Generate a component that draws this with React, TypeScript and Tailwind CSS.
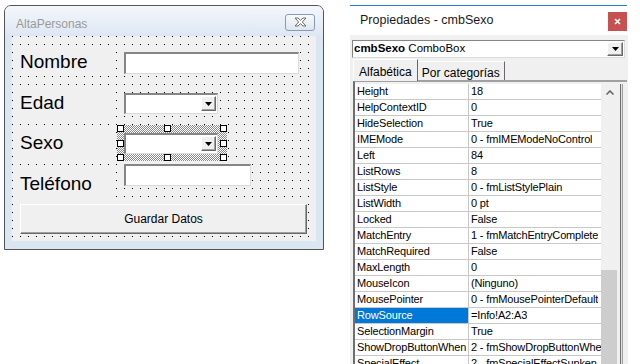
import React from 'react';

const PROPS: [string, string][] = [
  ['Height', '18'],
  ['HelpContextID', '0'],
  ['HideSelection', 'True'],
  ['IMEMode', '0 - fmIMEModeNoControl'],
  ['Left', '84'],
  ['ListRows', '8'],
  ['ListStyle', '0 - fmListStylePlain'],
  ['ListWidth', '0 pt'],
  ['Locked', 'False'],
  ['MatchEntry', '1 - fmMatchEntryComplete'],
  ['MatchRequired', 'False'],
  ['MaxLength', '0'],
  ['MouseIcon', '(Ninguno)'],
  ['MousePointer', '0 - fmMousePointerDefault'],
  ['RowSource', '=Info!A2:A3'],
  ['SelectionMargin', 'True'],
  ['ShowDropButtonWhen', '2 - fmShowDropButtonWhenNever'],
  ['SpecialEffect', '2 - fmSpecialEffectSunken'],
];

function DropButton({ className = '' }: { className?: string }) {
  return (
    <div
      className={`flex items-center justify-center bg-[#f0f0f0] border border-t-white border-l-white border-r-[#696969] border-b-[#696969] shadow-[inset_-1px_-1px_0_#a0a0a0] ${className}`}
    >
      <svg width="7" height="4" viewBox="0 0 7 4">
        <path d="M0 0h7L3.5 4z" fill="#000" />
      </svg>
    </div>
  );
}

function TextBox({ w }: { w: string }) {
  return (
    <div
      className={`${w} h-[22px] bg-white border-t-2 border-l-2 border-r border-b border-t-[#858585] border-l-[#858585] border-r-[#dcdcdc] border-b-[#dcdcdc]`}
    />
  );
}

function Combo() {
  return (
    <div className="relative w-[94px] h-[21px] bg-white border-t-2 border-l-2 border-r border-b border-t-[#858585] border-l-[#858585] border-r-[#dcdcdc] border-b-[#dcdcdc] flex justify-end items-start pt-[1px] pr-[1px]">
      <DropButton className="w-[15px] h-[15px]" />
    </div>
  );
}

function Handle({ className }: { className: string }) {
  return <div className={`absolute w-[7px] h-[7px] bg-white border border-black ${className}`} />;
}

function Label({ text }: { text: string }) {
  return (
    <div className="w-[103px] h-[27px] ml-[1px] bg-[#f0f0f0] flex items-center pl-[7px] text-[19px] text-black">
      {text}
    </div>
  );
}

function FormWindow() {
  return (
    <div className="w-[320px] h-[245px] border border-[#555] rounded-t-[7px] bg-[#dbe6f3] flex flex-col overflow-hidden">
      <div className="h-[30px] shrink-0 flex items-center justify-between bg-gradient-to-b from-[#f4f7fb] to-[#dde7f3] pl-[11px] pr-[8px] pt-[6px]">
        <span className="text-[12px] text-[#9a9a9a]">AltaPersonas</span>
        <div className="w-[30px] h-[17px] -mt-[4px] rounded-[3px] border border-[#8a9ab3] bg-gradient-to-b from-[#f8fafc] to-[#dfe6ef] flex items-center justify-center">
          <svg width="13" height="10" viewBox="0 0 13 10">
            <path
              d="M1 1h3l2.5 2.3L9 1h3L8.3 5 12 9H9L6.5 6.7 4 9H1l3.7-4z"
              fill="#fff"
              stroke="#6b6b6b"
              strokeWidth="1"
              strokeLinejoin="round"
            />
          </svg>
        </div>
      </div>
      <div className="mx-[7px] h-[205px] shrink-0 bg-[#f0f0f0] bg-[conic-gradient(at_1px_1px,transparent_270deg,#000_0)] bg-[size:8px_8px] flex flex-col pt-[13px]">
        <div className="flex items-center h-[27px]">
          <Label text="Nombre" />
          <div className="ml-[8px]">
            <TextBox w="w-[175px]" />
          </div>
        </div>
        <div className="flex items-center h-[27px] mt-[14px]">
          <Label text="Edad" />
          <div className="ml-[8px]">
            <Combo />
          </div>
        </div>
        <div className="flex items-center h-[27px] mt-[13px]">
          <Label text="Sexo" />
          <div className="ml-[8px] relative">
            <div className="absolute -left-[7px] -right-[9px] -top-[8px] -bottom-[7px] bg-[repeating-conic-gradient(#8a8a8a_0_25%,#fff_0_50%)] bg-[size:2px_2px]" />
            <Handle className="-left-[7px] -top-[8px]" />
            <Handle className="left-[40px] -top-[8px]" />
            <Handle className="-right-[9px] -top-[8px]" />
            <Handle className="-left-[7px] top-[7px]" />
            <Handle className="-right-[9px] top-[7px]" />
            <Handle className="-left-[7px] -bottom-[7px]" />
            <Handle className="left-[40px] -bottom-[7px]" />
            <Handle className="-right-[9px] -bottom-[7px]" />
            <div className="relative">
              <Combo />
            </div>
          </div>
        </div>
        <div className="flex items-start mt-[7px]">
          <div className="mt-[7px]">
            <Label text="Teléfono" />
          </div>
          <div className="ml-[8px]">
            <TextBox w="w-[127px]" />
          </div>
        </div>
        <div className="ml-[8px] mt-[6px] w-[287px] h-[30px] bg-[#f0f0f0] border border-t-white border-l-white border-r-[#696969] border-b-[#696969] shadow-[inset_-1px_-1px_0_#a0a0a0] flex items-center justify-center text-[12px] text-black">
          Guardar Datos
        </div>
      </div>
    </div>
  );
}

function PropertiesPanel() {
  return (
    <div className="w-[278px] h-[364px] shrink-0 flex flex-col">
      <div className="h-[35px] shrink-0 bg-white flex flex-col">
        <div className="mt-[5px] h-[1px] w-[277px] bg-[#2b7bcf]" />
        <div className="flex-1 flex items-center justify-between pl-[10px] pr-[1px]">
          <span className="text-[12.5px] text-[#1a1a1a]">Propiedades - cmbSexo</span>
          <div className="w-[19px] h-[19px] mt-[2px] bg-[#c75050] flex items-center justify-center">
            <svg width="7" height="7" viewBox="0 0 7 7">
              <path d="M1 1l5 5M6 1L1 6" stroke="#fff" strokeWidth="1.6" />
            </svg>
          </div>
        </div>
      </div>
      <div className="flex-1 bg-[#f0f0f0] flex flex-col pt-[5px] pl-[2px] overflow-hidden">
        <div className="w-[273px] h-[18px] bg-white border border-t-[#858585] border-l-[#858585] border-r-[#dcdcdc] border-b-[#dcdcdc] flex items-center justify-between pl-[1px] pr-[1px] text-[11.5px] text-black">
          <span>
            <b>cmbSexo</b> ComboBox
          </span>
          <DropButton className="w-[16px] h-[14px]" />
        </div>
        <div className="flex items-end h-[23px] mt-[1px] pl-[1px] text-[12px] text-black">
          <div className="h-[22px] px-[5px] pt-[3px] bg-[#f0f0f0] border border-b-0 border-t-white border-l-white border-r-[#696969] relative z-10 -mb-[1px]">
            Alfabética
          </div>
          <div className="h-[19px] px-[4px] pt-[2px] border border-b-0 border-t-white border-l-0 border-r-[#696969]">
            Por categorías
          </div>
        </div>
        <div className="ml-[1px] w-[274px] flex-1 border-t-2 border-l-2 border-t-[#a0a0a0] border-l-[#6f6f6f] flex pt-[2px] text-[11px] tracking-[-0.15px] text-black">
          <div className="w-[246px] flex flex-col bg-white">
            {PROPS.map(([name, value]) => {
              const sel = name === 'RowSource';
              return (
                <div key={name} className="h-[16px] shrink-0 flex border-b border-[#c8c8c8] leading-[15px]">
                  <div
                    className={`w-[114px] shrink-0 pl-[2px] border-r border-[#c8c8c8] whitespace-nowrap overflow-hidden ${
                      sel ? 'bg-[#0078d7] text-white' : ''
                    }`}
                  >
                    {name}
                  </div>
                  <div className="pl-[2px] whitespace-nowrap overflow-hidden">{value}</div>
                </div>
              );
            })}
          </div>
          <div className="w-[17px] flex flex-col bg-[#f0f0f0]">
            <div className="h-[16px] flex items-center justify-center">
              <svg width="8" height="5" viewBox="0 0 8 5">
                <path d="M0.5 4.5L4 1l3.5 3.5" stroke="#606060" strokeWidth="1.5" fill="none" />
              </svg>
            </div>
            <div className="h-[170px]" />
            <div className="flex-1 mr-[1px] bg-[#cdcdcd]" />
          </div>
          <div className="w-[2px] bg-[#f0f0f0]" />
          <div className="w-[1px] bg-[#6f6f6f]" />
          <div className="w-[1px] bg-[#e0e0e0]" />
          <div className="w-[1px] bg-[#a0a0a0]" />
        </div>
      </div>
    </div>
  );
}

export default function App() {
  return (
    <div className="w-[640px] h-[364px] overflow-hidden bg-white flex font-['Liberation_Sans',Arial,sans-serif]">
      <div className="pl-[4px] pt-[5px] w-[350px] shrink-0">
        <FormWindow />
      </div>
      <PropertiesPanel />
    </div>
  );
}
